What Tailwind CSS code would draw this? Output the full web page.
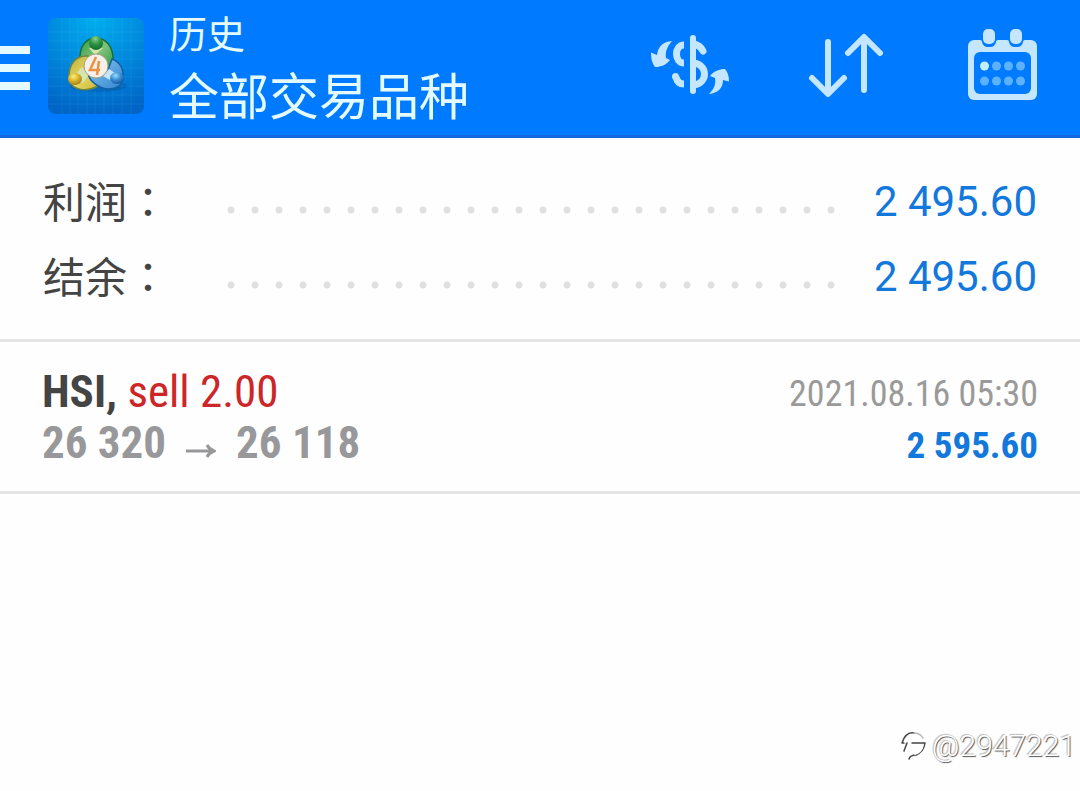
<!DOCTYPE html>
<html lang="zh-CN">
<head>
<meta charset="utf-8">
<meta name="viewport" content="width=device-width, initial-scale=1">
<title>历史</title>
<script src="https://cdn.jsdelivr.net/npm/@tailwindcss/browser@4"></script>
</head>
<body class="relative min-h-screen bg-[#fefefe] font-['Roboto','Noto_Sans_CJK_SC',sans-serif] text-[#444]">
<header class="flex h-[138px] items-start border-b-3 border-[#1467dc] bg-[#007aff] pr-10 text-[#e3fbff]">
  <button type="button" aria-label="菜单" class="mt-[46px] flex w-[30px] flex-col gap-[10px]">
    <span class="h-2 w-full bg-[#e3fbff]"></span>
    <span class="h-2 w-full bg-[#e3fbff]"></span>
    <span class="h-2 w-full bg-[#e3fbff]"></span>
  </button>
  <svg class="mt-[18px] ml-[18px] size-24 shrink-0" viewBox="0 0 96 96" role="img" aria-label="MetaTrader 4">
    <defs>
      <radialGradient id="bg" cx=".5" cy="0" r="1"><stop offset="0" stop-color="#00aeee"/><stop offset=".5" stop-color="#008ade"/><stop offset="1" stop-color="#0065c6"/></radialGradient>
      <linearGradient id="g" x2="1" y2="1"><stop stop-color="#2f9a42"/><stop offset=".5" stop-color="#7fc27a"/><stop offset="1" stop-color="#2c9340"/></linearGradient>
      <linearGradient id="y" x2="1" y2="1"><stop stop-color="#b9ac38"/><stop offset=".5" stop-color="#e6d862"/><stop offset="1" stop-color="#c2b036"/></linearGradient>
      <linearGradient id="b" x2="1" y2="1"><stop stop-color="#8bcaf0"/><stop offset="1" stop-color="#2f84cf"/></linearGradient>
      <radialGradient id="gh" cx=".45" cy=".2" r=".8"><stop stop-color="#8ed28c"/><stop offset=".5" stop-color="#2d9345"/><stop offset="1" stop-color="#116e2c"/></radialGradient>
      <radialGradient id="yh" cx=".4" cy=".3" r=".7"><stop stop-color="#fff07c"/><stop offset=".5" stop-color="#dbb62d"/><stop offset="1" stop-color="#a58115"/></radialGradient>
      <radialGradient id="bh" cx=".4" cy=".3" r=".7"><stop stop-color="#9bdcff"/><stop offset=".5" stop-color="#3d91d4"/><stop offset="1" stop-color="#1659a8"/></radialGradient>
    </defs>
    <rect width="96" height="96" rx="8" fill="url(#bg)"/>
    <path d="M14 0v96M22 0v96M30 0v96M39 0v96M47 0v96M56 0v96M65 0v96M74 0v96M83 0v96M0 14h96M0 23h96M0 32h96M0 41h96M0 50h96M0 59h96M0 68h96M0 77h96M0 86h96" stroke="#7be4ff" stroke-opacity=".1"/>
    <ellipse cx="50" cy="68" rx="29" ry="6" fill="#033f83" opacity=".25"/>
    <path d="M32 43C31 28 38 20 48 20s18 9 17 24q0 7-5 10L48 46l-10 6q-6-4-6-9Z" fill="url(#g)" stroke="#176e3c" stroke-width="1.5"/>
    <path d="M40 38C27 37 20 47 21 62c4 11 18 12 29 6l6-8-14-4 3-13Z" fill="url(#y)" stroke="#6f8540" stroke-width="1.5"/>
    <path d="M64 41c8 3 12 10 11 20-2 8-7 10-15 10-9-1-18-7-20-15l8 1 12-5Z" fill="url(#b)" stroke="#145fa8" stroke-width="1.5"/>
    <path d="m29 55 5-6 6 8-4 7-4 1M41 30l6 7 8-7" fill="#d5e6b1"/>
    <path d="m67 55-6-4-6 7 7 4" fill="#c6e5f8"/>
    <ellipse cx="48" cy="25" rx="7" ry="7" fill="url(#gh)"/>
    <ellipse cx="27" cy="61" rx="7" ry="6" fill="url(#yh)"/>
    <ellipse cx="69" cy="60" rx="7" ry="6" fill="url(#bh)"/>
    <circle cx="48" cy="48" r="12" fill="#f5f0ea" stroke="#a59e7c" stroke-width="1"/>
    <path d="m48 39-6 13h10M51 43l-2 14" fill="none" stroke="#eb9140" stroke-width="2.5"/>
  </svg>
  <div class="ml-[25px] flex-1 whitespace-nowrap">
    <h1 class="mt-[13px] text-[38px] leading-[44px]">历史</h1>
    <p class="mt-[6px] text-[50px] leading-[70px]">全部交易品种</p>
  </div>
  <nav class="mt-[26px] flex gap-[75px] text-[#c5e6ff]">
    <button type="button" aria-label="货币">
      <svg class="h-20 w-[84px]" viewBox="0 1 84 80" fill="none" stroke="currentColor">
        <path d="M45 13v53" stroke-width="6" stroke-linecap="round"/>
        <path d="M36 20C26 20 26 38 36 38M28 52c1 5 4 7 8 7" stroke-width="7"/>
        <circle cx="27.500" cy="51.500" r="3.500" fill="currentColor" stroke="none"/>
        <path d="M46 19c5 1 7 3 9 7M46 38c14 2 14 20 0 22" stroke-width="7" stroke-linecap="round"/>
        <path d="M24 16C15 17 10 21 9 30L3 27.500c0 6 1 11 4 14.500 6 0 11-2 15-7l-4-2c-1-6 1-11 6-17ZM61 69c9-1 14-6 14-14l6 1.500c0-5-1-9-4-12.500-6 0-11 2-15 7l5 2c1 6-1 11-6 16Z" fill="currentColor" stroke="none"/>
      </svg>
    </button>
    <button type="button" aria-label="排序">
      <svg class="h-20 w-[82px]" viewBox="0 1 82 80" fill="none" stroke="currentColor" stroke-width="6" stroke-linecap="round" stroke-linejoin="round">
        <path d="M21 17v51M5 53l16 16 16-16M57 65V14M41 28l16-16 16 16"/>
      </svg>
    </button>
    <button type="button" aria-label="日期">
      <svg class="h-20 w-[76px]" viewBox="0 0 76 80">
        <rect x="4" y="14" width="69" height="60" rx="6" fill="currentColor"/>
        <rect x="10" y="26" width="57" height="42" rx="6" fill="#007aff"/>
        <path d="M16 14q2 0 2 2 1 5 6 5h2q5 0 6-5 0-2 2-2ZM43 14q2 0 2 2 1 5 6 5h2q5 0 6-5 0-2 2-2Z" fill="#007aff"/>
        <rect x="19" y="3" width="12" height="15" rx="5" fill="currentColor"/>
        <rect x="46" y="3" width="12" height="15" rx="5" fill="currentColor"/>
        <g fill="#5cb2ff"><circle cx="32.500" cy="40" r="4.500"/><circle cx="44.500" cy="40" r="4.500"/><circle cx="56.500" cy="40" r="4.500"/><circle cx="20.500" cy="55" r="4.500"/><circle cx="32.500" cy="55" r="4.500"/><circle cx="44.500" cy="55" r="4.500"/><circle cx="56.500" cy="55" r="4.500"/></g>
        <circle cx="20.500" cy="40" r="4.500" fill="#c5efff"/>
      </svg>
    </button>
  </nav>
</header>
<main>
  <dl class="border-b-3 border-[#e5e5e5] px-[43px] pt-[26px] pb-[25px] text-[42px] leading-[75px]">
    <div class="flex h-[75px] items-center">
      <dt class="w-44">利润<span lang="zh-TW" class="font-['Noto_Sans_CJK_TC',sans-serif]">：</span></dt>
      <dd class="flex flex-1 items-center gap-8">
        <span class="mt-4 h-2 flex-1 bg-[radial-gradient(circle,#e0e0e0_3px,transparent_4px)] bg-[length:24px_8px] bg-repeat-x"></span>
        <span class="text-[#1278dc]">2 495.60</span>
      </dd>
    </div>
    <div class="flex h-[75px] items-center">
      <dt class="w-44">结余<span lang="zh-TW" class="font-['Noto_Sans_CJK_TC',sans-serif]">：</span></dt>
      <dd class="flex flex-1 items-center gap-8">
        <span class="mt-4 h-2 flex-1 bg-[radial-gradient(circle,#e0e0e0_3px,transparent_4px)] bg-[length:24px_8px] bg-repeat-x"></span>
        <span class="text-[#1278dc]">2 495.60</span>
      </dd>
    </div>
  </dl>
  <article class="flex justify-between border-b-3 border-[#e5e5e5] px-[42px] pt-6 pb-5 font-['Roboto_Condensed','Liberation_Sans_Narrow',sans-serif] text-[45px] leading-[51px] whitespace-nowrap">
    <div>
      <p><strong class="font-bold">HSI,</strong> <span class="text-[#cc2629]">sell 2.00</span></p>
      <p class="flex items-center font-bold text-[#98989b]">26 320
        <svg class="mx-5 mt-4 h-4 w-[30px]" viewBox="0 0 30 16" fill="none" stroke="currentColor" stroke-width="3" role="img" aria-label="至"><path d="M0 8h28M21 2q2 4 7 6-5 2-7 6"/></svg>
        26 118</p>
    </div>
    <div class="pt-[3px] text-right">
      <time datetime="2021-08-16T05:30" class="block text-[36px] leading-[51px] text-[#9a9a9a]">2021.08.16 05:30</time>
      <p class="text-[37px] leading-[51px] font-bold text-[#1278dc]">2 595.60</p>
    </div>
  </article>
</main>
<div class="absolute right-1 bottom-[26px] flex h-10 items-center gap-1 text-[30px] font-light text-white">
  <svg class="h-8 w-7 shrink-0" viewBox="0 0 28 32" fill="none" stroke-linecap="round">
    <path d="M2 14C5 5 9 3 14 4M2 14h3M12 14h13M4 22l3-8M25 14c-1 7-4 10-9 12-4 0-6 1-7 4" stroke="#444" stroke-width="1.5"/>
    <path d="M14 4q6 0 9 5" stroke="#bbb" stroke-width="1.5"/>
    <path d="M5 14c2-6 5-9 10-8M6 22l3-7M13 16h10c-1 5-4 8-8 9" stroke="#fff" stroke-width="1.5"/>
  </svg>
  <span class="[text-shadow:1px_1px_1px_#555,-1px_-1px_1px_#bbb]">@2947221</span>
</div>
</body>
</html>
